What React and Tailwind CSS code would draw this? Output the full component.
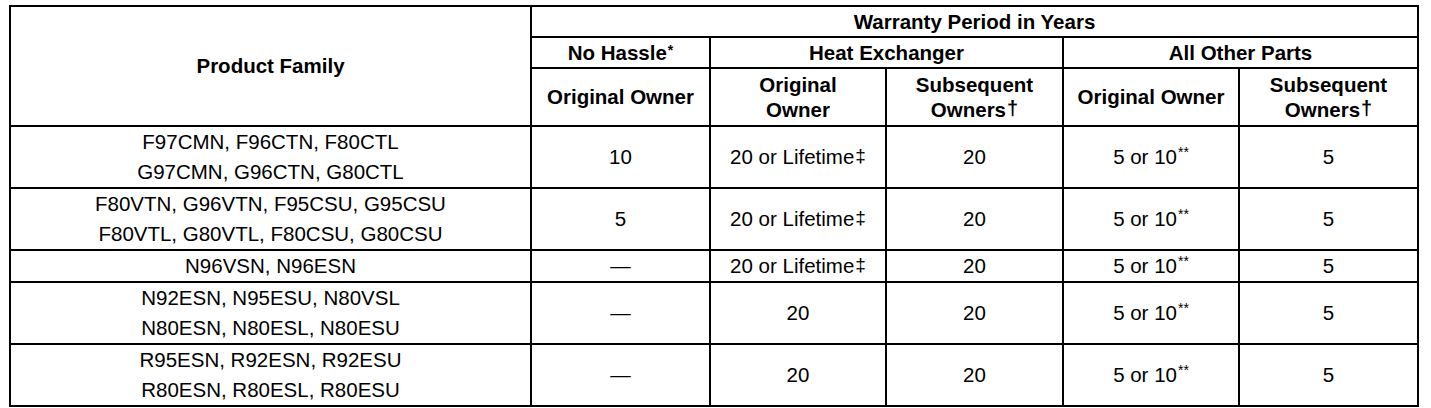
const rows = [
  { family: ["F97CMN, F96CTN, F80CTL", "G97CMN, G96CTN, G80CTL"], hassle: "10", lifetime: true },
  { family: ["F80VTN, G96VTN, F95CSU, G95CSU", "F80VTL, G80VTL, F80CSU, G80CSU"], hassle: "5", lifetime: true },
  { family: ["N96VSN, N96ESN"], hassle: "—", lifetime: true },
  { family: ["N92ESN, N95ESU, N80VSL", "N80ESN, N80ESL, N80ESU"], hassle: "—", lifetime: false },
  { family: ["R95ESN, R92ESN, R92ESU", "R80ESN, R80ESL, R80ESU"], hassle: "—", lifetime: false },
];

const cell = "border-2 border-black text-center align-middle p-0";

function Dagger() {
  return <sup className="relative -top-[2px] ml-[1px] text-[20px] font-bold">†</sup>;
}

export default function App() {
  return (
    <div className="min-h-[408px] bg-white pl-[9px] pt-[5px] font-['Liberation_Sans',Arial,sans-serif] text-[20.5px] text-black">
      <table className="w-[1408px] table-fixed border-collapse">
        <colgroup>
          <col className="w-[521px]" />
          <col className="w-[179px]" />
          <col className="w-[176px]" />
          <col className="w-[177px]" />
          <col className="w-[176px]" />
          <col className="w-[179px]" />
        </colgroup>
        <thead className="font-bold">
          <tr className="h-[31px]">
            <th rowSpan={3} className={cell}>Product Family</th>
            <th colSpan={5} className={`${cell} leading-[26px]`}>Warranty Period in Years</th>
          </tr>
          <tr className="h-[31px]">
            <th className={`${cell} leading-[26px]`}>
              No Hassle<sup className="relative -top-[5px] ml-[1px] text-[14px]">*</sup>
            </th>
            <th colSpan={2} className={`${cell} leading-[26px]`}>Heat Exchanger</th>
            <th colSpan={2} className={`${cell} leading-[26px]`}>All Other Parts</th>
          </tr>
          <tr className="h-[58px]">
            <th className={cell}>Original Owner</th>
            <th className={`${cell} leading-[25px]`}>
              Original
              <br />
              Owner
            </th>
            <th className={`${cell} leading-[25px]`}>
              Subsequent
              <br />
              Owners<Dagger />
            </th>
            <th className={cell}>Original Owner</th>
            <th className={`${cell} leading-[25px]`}>
              Subsequent
              <br />
              Owners<Dagger />
            </th>
          </tr>
        </thead>
        <tbody className="leading-[30px]">
          {rows.map((r, i) => (
            <tr key={i}>
              <td className={cell}>
                {r.family.map((f) => (
                  <div key={f}>{f}</div>
                ))}
              </td>
              <td className={cell}>{r.hassle}</td>
              <td className={cell}>
                {r.lifetime ? (
                  <>
                    20 or Lifetime<sup className="relative -top-[2px] ml-[1px] text-[19px]">‡</sup>
                  </>
                ) : (
                  "20"
                )}
              </td>
              <td className={cell}>20</td>
              <td className={cell}>
                5 or 10<sup className="relative -top-[7px] ml-[1px] text-[14px]">**</sup>
              </td>
              <td className={cell}>5</td>
            </tr>
          ))}
        </tbody>
      </table>
    </div>
  );
}
